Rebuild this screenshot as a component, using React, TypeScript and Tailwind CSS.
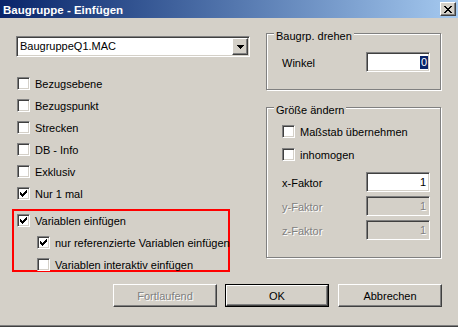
import React from "react";

const sunken =
  "border border-t-[#808080] border-l-[#808080] border-r-white border-b-white shadow-[inset_1px_1px_0_#404040,inset_-1px_-1px_0_#d4d0c8]";
const raised =
  "border border-t-white border-l-white border-r-[#404040] border-b-[#404040] shadow-[inset_-1px_-1px_0_#808080]";
const grayText = "text-[#808080] [text-shadow:1px_1px_0_#fff]";

function CheckMark() {
  return (
    <svg width="7" height="7" viewBox="0 0 7 7" shapeRendering="crispEdges">
      <path
        fill="#000"
        d="M6 0h1v1h-1z M5 1h2v1h-2z M0 2h1v1h-1z M4 2h3v1h-3z M0 3h2v1h-2z M3 3h3v1h-3z M0 4h5v1h-5z M1 5h3v1h-3z M2 6h1v1h-1z"
      />
    </svg>
  );
}

function Check({ label, checked }: { label: string; checked?: boolean }) {
  return (
    <div className="flex h-[13px] items-start gap-[5px]">
      <span className={`box-border flex h-[13px] w-[13px] shrink-0 items-center justify-center bg-white ${sunken}`}>
        {checked && <CheckMark />}
      </span>
      <span className="whitespace-nowrap leading-[15px]">{label}</span>
    </div>
  );
}

function Field({ label, value, disabled, selected }: { label: string; value: string; disabled?: boolean; selected?: boolean }) {
  return (
    <div className="flex h-[20px] items-start justify-between">
      <span className={`mt-[5px] leading-[13px] ${disabled ? grayText : ""}`}>{label}</span>
      <div
        className={`box-border flex h-[20px] w-[64px] items-center justify-end ${disabled ? "bg-[#d4d0c8] pr-[3px]" : "bg-white pr-[3px]"} ${sunken}`}
      >
        {selected ? (
          <span className="mr-[-2px] bg-[#0a246a] px-[1px] leading-[13px] text-white">{value}</span>
        ) : (
          <span className={`mt-[1px] leading-[13px] ${disabled ? grayText : ""}`}>{value}</span>
        )}
      </div>
    </div>
  );
}

function Group({ title, className, children }: { title: string; className: string; children: React.ReactNode }) {
  return (
    <div className={`relative box-border w-[175px] border border-[#808080] shadow-[inset_1px_1px_0_#fff,1px_1px_0_#fff] ${className}`}>
      <span className="absolute -top-[4px] left-[7px] bg-[#d4d0c8] px-[2px] leading-[13px]">{title}</span>
      {children}
    </div>
  );
}

export default function App() {
  return (
    <div className="flex h-[327px] w-[458px] flex-col overflow-hidden bg-[#d4d0c8] font-['Liberation_Sans',Arial,sans-serif] text-[11px] text-black">
      {/* title bar */}
      <div className="flex h-[18px] shrink-0 items-center justify-between bg-linear-to-r from-[#0a246a] to-[#a6caf0] pl-[3px] pr-[2px]">
        <span className="pt-[2px] text-[11.5px] font-bold leading-[14px] text-white">Baugruppe - Einfügen</span>
        <div className={`box-border flex h-[14px] w-[16px] items-center justify-center bg-[#d4d0c8] ${raised}`}>
          <svg width="8" height="7" viewBox="0 0 8 7" shapeRendering="crispEdges">
            <path
              fill="#000"
              d="M0 0h2v1h-2z M6 0h2v1h-2z M1 1h2v1h-2z M5 1h2v1h-2z M2 2h4v1h-4z M3 3h2v1h-2z M2 4h4v1h-4z M1 5h2v1h-2z M5 5h2v1h-2z M0 6h2v1h-2z M6 6h2v1h-2z"
            />
          </svg>
        </div>
      </div>

      <div className="flex h-[266px] shrink-0">
        {/* left column */}
        <div className="ml-[16px] w-[234px]">
          <div className={`mt-[18px] box-border flex h-[21px] items-center bg-white p-[1px] ${sunken}`}>
            <span className="flex-1 pl-[2px] leading-[13px]">BaugruppeQ1.MAC</span>
            <div className={`box-border flex h-[17px] w-[16px] items-center justify-center bg-[#d4d0c8] ${raised}`}>
              <svg width="7" height="4" viewBox="0 0 7 4" shapeRendering="crispEdges">
                <path fill="#000" d="M0 0h7v1h-7z M1 1h5v1h-5z M2 2h3v1h-3z M3 3h1v1h-1z" />
              </svg>
            </div>
          </div>

          <div className="ml-[1px] mt-[20px] flex flex-col gap-[9px]">
            <Check label="Bezugsebene" />
            <Check label="Bezugspunkt" />
            <Check label="Strecken" />
            <Check label="DB - Info" />
            <Check label="Exklusiv" />
            <Check label="Nur 1 mal" checked />
          </div>

          <div className="-ml-[4px] mt-[9px] box-border flex h-[63px] w-[218px] flex-col gap-[9px] border-2 border-[#ff0000] pl-[3px] pt-[3px]">
            <Check label="Variablen einfügen" checked />
            <div className="ml-[20px]">
              <Check label="nur referenzierte Variablen einfügen" checked />
            </div>
            <div className="ml-[20px]">
              <Check label="Variablen interaktiv einfügen" />
            </div>
          </div>
        </div>

        {/* right column */}
        <div className="ml-[16px] mt-[15px] flex flex-col">
          <Group title="Baugrp. drehen" className="h-[57px] pl-[15px] pr-[10px] pt-[18px]">
            <Field label="Winkel" value="0" selected />
          </Group>

          <Group title="Größe ändern" className="mt-[17px] h-[151px] pl-[15px] pr-[10px] pt-[17px]">
            <div className="flex flex-col gap-[10px]">
              <Check label="Maßstab übernehmen" />
              <Check label="inhomogen" />
            </div>
            <div className="mt-[11px] flex flex-col gap-[4px]">
              <Field label="x-Faktor" value="1" />
              <Field label="y-Faktor" value="1" disabled />
              <Field label="z-Faktor" value="1" disabled />
            </div>
          </Group>
        </div>
      </div>

      {/* buttons */}
      <div className="flex h-[23px] shrink-0 justify-end pr-[16px]">
        <div className={`box-border flex h-[23px] w-[104px] items-center justify-center ${raised}`}>
          <span className={`pt-[1px] leading-[13px] ${grayText}`}>Fortlaufend</span>
        </div>
        <div className="ml-[8px] box-border h-[23px] w-[104px] border border-black">
          <div className={`box-border flex h-full w-full items-center justify-center ${raised}`}>
            <span className="pt-[1px] leading-[13px]">OK</span>
          </div>
        </div>
        <div className={`ml-[9px] box-border flex h-[23px] w-[104px] items-center justify-center ${raised}`}>
          <span className="pt-[1px] leading-[13px]">Abbrechen</span>
        </div>
      </div>

      <div className="flex-1" />
      <div className="h-[1px] shrink-0 bg-[#808080]" />
      <div className="h-[1px] shrink-0 bg-[#404040]" />
    </div>
  );
}
